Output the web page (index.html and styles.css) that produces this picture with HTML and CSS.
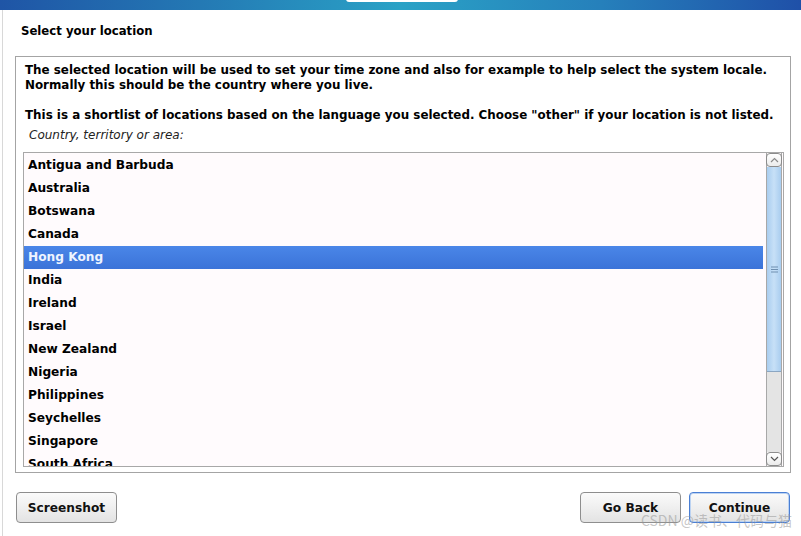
FILE: index.html
```html
<!DOCTYPE html>
<html lang="en">
<head>
<meta charset="UTF-8">
<title>Select your location</title>
<link rel="stylesheet" href="styles.css">
</head>
<body>
<div class="banner"><div class="logo"></div></div>
<div class="page">
    <h1 class="title">Select your location</h1>
    <div class="panel">
        <p class="info">The selected location will be used to set your time zone and also for example to help select the system locale. Normally this should be the country where you live.</p>
        <p class="info">This is a shortlist of locations based on the language you selected. Choose "other" if your location is not listed.</p>
        <p class="label">Country, territory or area:</p>
        <div class="listbox">
            <ul class="items">
                <li>Antigua and Barbuda</li>
                <li>Australia</li>
                <li>Botswana</li>
                <li>Canada</li>
                <li class="selected">Hong Kong</li>
                <li>India</li>
                <li>Ireland</li>
                <li>Israel</li>
                <li>New Zealand</li>
                <li>Nigeria</li>
                <li>Philippines</li>
                <li>Seychelles</li>
                <li>Singapore</li>
                <li>South Africa</li>
            </ul>
            <div class="scrollbar">
                <div class="arrow up">
                    <svg width="9" height="6" viewBox="0 0 9 6"><path d="M1 5 L4.5 1.5 L8 5" fill="none" stroke="#8a8a8a" stroke-width="1.2"/></svg>
                </div>
                <div class="thumb">
                    <svg class="grip" width="7" height="7" viewBox="0 0 7 7"><path d="M0 1H7M0 3.5H7M0 6H7" stroke="#6f8fb0" stroke-width="1"/></svg>
                </div>
                <div class="track"></div>
                <div class="arrow down">
                    <svg width="9" height="6" viewBox="0 0 9 6"><path d="M1 1 L4.5 4.5 L8 1" fill="none" stroke="#555" stroke-width="1.2"/></svg>
                </div>
            </div>
        </div>
    </div>
    <div class="actions">
        <button class="btn">Screenshot</button>
        <div class="spacer"></div>
        <button class="btn">Go Back</button>
        <button class="btn primary">Continue</button>
    </div>
    <div class="watermark">CSDN @读书、代码与猫</div>
</div>
</body>
</html>
```

FILE: styles.css
```css
body {
    margin: 0;
    font-family: "DejaVu Sans", sans-serif;
    background: #ffffff;
    color: #000;
    height: 536px;
    overflow: hidden;
}
.banner {
    height: 10px;
    background: linear-gradient(90deg, #1f55a6 0%, #2479b4 25%, #2aa2c6 50%, #2680bb 75%, #1f50a8 100%);
    position: relative;
}
.logo {
    position: absolute;
    left: 346px;
    top: -8px;
    width: 112px;
    height: 10px;
    background: #fff;
    border-radius: 3px;
}
.page {
    position: relative;
    border-left: 1px solid #d8d8d8;
    margin-left: 2px;
    height: 526px;
    padding: 0 10px 0 12px;
}
.title {
    margin: 0;
    padding: 13px 0 0 6px;
    height: 33px;
    font-family: "DejaVu Sans Condensed", "DejaVu Sans", sans-serif;
    font-size: 13px;
    font-weight: 600;
    line-height: 16px;
}
.panel {
    border: 1px solid #a4a4a4;
    height: 417px;
    padding: 6px 4px 0 9px;
    box-sizing: border-box;
    width: 776px;
}
.info {
    margin: 0 0 15px;
    font-size: 11.9px;
    font-weight: bold;
    line-height: 15px;
}
.label {
    margin: -10px 0 0 4px;
    font-size: 12px;
    font-style: italic;
    line-height: 15px;
    color: #222;
}
.listbox {
    margin: 9px 0 0 -2px;
    border: 1px solid #a8a8a8;
    height: 315px;
    width: 761px;
    box-sizing: border-box;
    background: #fffbfd;
    display: flex;
    overflow: hidden;
}
.items {
    list-style: none;
    margin: 0;
    padding: 1px 0 0;
    flex: 1;
}
.items li {
    height: 23px;
    line-height: 23px;
    padding-left: 4px;
    font-size: 12.2px;
    font-weight: bold;
    margin-right: 3px;
}
.items li.selected {
    background: linear-gradient(180deg, #4a86e8, #3b73d8);
    color: #eef4ff;
}
.scrollbar {
    width: 14px;
    margin: 0 1px 0 0;
    display: flex;
    flex-direction: column;
    border-left: 1px solid #a8a8a8;
    border-right: 1px solid #a8a8a8;
}
.arrow {
    height: 14px;
    background: linear-gradient(180deg, #ffffff, #ececec);
    border: 1px solid #8c8c8c;
    border-radius: 4px;
    box-sizing: border-box;
    display: flex;
    align-items: center;
    justify-content: center;
    margin: 0 -1px;
}
.thumb {
    height: 204px;
    background: linear-gradient(90deg, #a9cdef, #c7e0f7 50%, #a9cdef);
    border-bottom: 1px solid #8ba6c2;
    display: flex;
    align-items: center;
    justify-content: center;
}
.track {
    flex: 1;
    background: #e4e4e4;
}
.actions {
    display: flex;
    gap: 8px;
    margin-top: 19px;
    width: 774px;
    margin-left: 1px;
}
.spacer {
    flex: 1;
}
.btn {
    width: 101px;
    height: 31px;
    font-family: "DejaVu Sans", sans-serif;
    font-size: 12.2px;
    font-weight: bold;
    color: #111;
    background: linear-gradient(180deg, #fbfbfb, #e3e3e3);
    border: 1px solid #8e8e8e;
    border-radius: 4px;
    padding: 0;
}
.btn.primary {
    border-color: #4a7fd4;
    box-shadow: inset 0 0 0 1px #bcd3f2;
}
.watermark {
    position: absolute;
    right: 9px;
    bottom: 6px;
    font-family: "Noto Sans CJK SC", sans-serif;
    font-size: 14px;
    color: rgba(150, 150, 150, 0.55);
}
```
